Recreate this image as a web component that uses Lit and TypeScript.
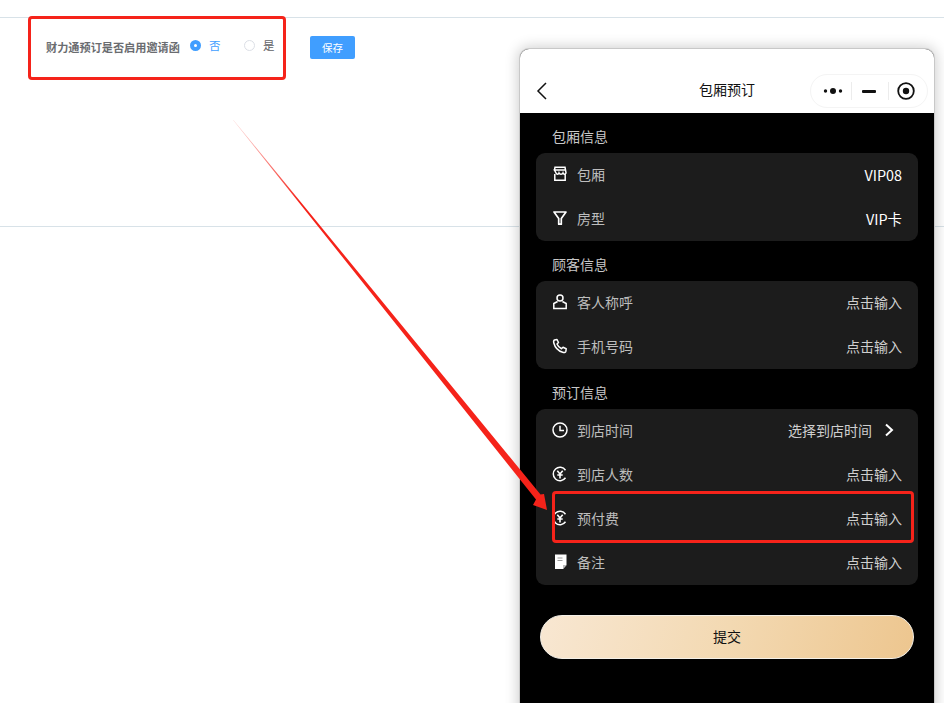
import { LitElement, html, css, svg } from "lit";
import { customElement } from "lit/decorators.js";

const I = (c: unknown) => html`<svg class="ico" viewBox="0 0 16 16" fill="none" stroke="#fff" stroke-width="1.500">${c}</svg>`;
const icons: Record<string, unknown> = {
  shop: I(svg`<path d="M3 1.200h10l.5 2.800H2.500zM2.500 4h11l.5 3c-.6 1.600-2.500 1.600-3 0-.6 1.600-3.400 1.600-4 0-.5 1.600-2.400 1.600-3 0zM2.800 8v6.300h10.400V8"/>`),
  filter: I(svg`<path d="M2 2h12L9.300 8.500V14.200H6.700V8.500z" stroke-linejoin="round" stroke-width="1.700"/>`),
  user: I(svg`<circle cx="8" cy="4" r="3"/><path d="M5.600 7.500 1.800 9.500V14.500H14.200V9.500L10.400 7.500"/>`),
  phone: I(svg`<path d="M2.500 2 5 1.500l1.500 3L5 6c.8 2 2.500 3.800 4.500 4.700L11 9.300l3.200 1.500-.3 2.400c-.2 1.300-1.900 1.600-3.200 1.100C6.500 13 3 9.500 1.800 5c-.3-1.200-.2-2.600.7-3z" stroke-linejoin="round"/>`),
  clock: I(svg`<circle cx="8" cy="8" r="7"/><path d="M8 3.800V8.500H12"/>`),
  yen: I(svg`<path d="M13.500 4.200A6.700 6.700 0 1 0 13.500 11.800"/><path d="M5.300 4.800 8 8l2.700-3.200M5.300 9h5.400M8 8v4.500" stroke-width="1.600"/>`),
  note: html`<svg class="ico" viewBox="0 0 16 16"><path d="M3 .5h11.500V11L11 15H3z" fill="#fff"/><path d="M5.500 4h5M5.500 6.500h5" stroke="#999" stroke-width="1"/><path d="M11 15v-4h3.500z" fill="#bbb"/></svg>`,
};

interface Row { icon: string; label: string; value: string; strong?: boolean; chevron?: boolean }
const sections: { title: string; rows: Row[] }[] = [
  { title: "包厢信息", rows: [
    { icon: "shop", label: "包厢", value: "VIP08", strong: true },
    { icon: "filter", label: "房型", value: "VIP卡", strong: true },
  ] },
  { title: "顾客信息", rows: [
    { icon: "user", label: "客人称呼", value: "点击输入" },
    { icon: "phone", label: "手机号码", value: "点击输入" },
  ] },
  { title: "预订信息", rows: [
    { icon: "clock", label: "到店时间", value: "选择到店时间", chevron: true },
    { icon: "yen", label: "到店人数", value: "点击输入" },
    { icon: "yen", label: "预付费", value: "点击输入" },
    { icon: "note", label: "备注", value: "点击输入" },
  ] },
];

@customElement("app-root")
export class AppRoot extends LitElement {
  static styles = css`
    :host {
      display: block; position: relative; width: 944px; height: 703px; overflow: hidden; background: #fff;
      font-family: "Noto Sans CJK SC", "Liberation Sans", sans-serif;
    }
    .rule { height: 1px; background: #d8e2e8; }
    .rule.top { margin-top: 17px; }
    .form { height: 208px; box-sizing: border-box; padding: 18px 0 0 46px; display: flex; align-items: flex-start; font-size: 11.500px; color: #5f6165; }
    .form .q { line-height: 20px; margin-top: 1px; font-size: 11.170px; font-weight: 700; color: #6a6c70; width: 144px; white-space: nowrap; }
    .radio { display: flex; align-items: center; height: 18px; line-height: 18px; }
    .radio.on { width: 54px; color: #409eff; }
    .radio.off { width: 66px; }
    .dot { width: 11px; height: 11px; border-radius: 50%; box-sizing: border-box; margin-right: 8px; }
    .on .dot { background: #fff; border: 4px solid #409eff; }
    .off .dot { border: 1px solid #dcdfe6; }
    .save { width: 45px; height: 23px; background: #409eff; color: #fff; border-radius: 2px; display: flex; align-items: center; justify-content: center; font-size: 10.500px; }
    .phone { position: absolute; left: 520px; top: 49px; width: 414px; height: 680px; box-sizing: border-box; background: #000; border-radius: 9px 9px 0 0; box-shadow: 0 0 0 1px #c8c8c8, 0 0 14px 2px rgba(0,0,0,.2); overflow: hidden; }
    .nav { height: 64px; background: #fff; position: relative; display: flex; justify-content: center; align-items: flex-end; box-sizing: border-box; padding-bottom: 13px; font-size: 14px; line-height: 22px; color: #111; }
    .back { position: absolute; left: 15px; top: 32px; width: 14px; height: 20px; }
    .capsule { position: absolute; left: 290px; top: 25px; width: 118px; height: 34px; box-sizing: border-box; border: 1px solid #f4f4f4; border-radius: 17px; display: grid; grid-template-columns: 40px 1px 36px 1px 1fr; align-items: center; }
    .capsule > div { display: flex; align-items: center; height: 100%; }
    .seg1 { padding-left: 12px; }
    .seg2 { padding-left: 10px; }
    .seg3 { padding-left: 8px; }
    .sep { width: 1px; height: 18px; background: #ececec; }
    .body { padding: 0 16px; }
    .title { height: 40px; line-height: 46px; padding-left: 16px; font-size: 14px; color: #c8c8c8; }
    .card { background: #1c1c1c; border-radius: 9px; }
    .row { height: 44px; box-sizing: border-box; padding: 0 16px 2px; display: flex; align-items: center; font-size: 14px; color: #bdbdbd; }
    .ico { width: 16px; height: 16px; margin-right: 9px; flex: none; }
    .val { margin-left: auto; color: #cfcfcf; }
    .val.strong { color: #fff; font-size: 14.400px; }
    .chev { width: 10px; height: 14px; margin-left: 12px; margin-right: 8px; }
    .submit { margin: 30px 4px 0; height: 44px; border-radius: 22px; border: 1px solid #f4f0e8; box-sizing: border-box; background: linear-gradient(105deg, #f8e7d2, #f3d9b2 50%, #edc68f); color: #111; font-size: 14px; padding-bottom: 2px; display: flex; align-items: center; justify-content: center; }
    .ann { position: absolute; border: 3px solid #f5231a; border-radius: 4px; box-sizing: border-box; }
    .ann.a { left: 28px; top: 16px; width: 258px; height: 64px; }
    .ann.b { left: 552px; top: 491px; width: 362px; height: 52px; }
    .arrow { position: absolute; left: 0; top: 0; width: 944px; height: 703px; pointer-events: none; }
  `;

  render() {
    return html`
      <div class="rule top"></div>
      <div class="form">
        <div class="q">财力通预订是否启用邀请函</div>
        <div class="radio on"><span class="dot"></span>否</div>
        <div class="radio off"><span class="dot"></span>是</div>
        <div class="save">保存</div>
      </div>
      <div class="rule"></div>

      <div class="phone">
        <div class="nav">
          <svg class="back" viewBox="0 0 14 20" fill="none" stroke="#111" stroke-width="1.500"><path d="M11 2 3 10l8 8"/></svg>
          包厢预订
          <div class="capsule">
            <div class="seg1"><svg width="20" height="8" viewBox="0 0 20 8" fill="#111"><circle cx="2.500" cy="4" r="1.700"/><circle cx="10" cy="4" r="3"/><circle cx="17.500" cy="4" r="1.700"/></svg></div>
            <span class="sep"></span>
            <div class="seg2"><svg width="14" height="3" viewBox="0 0 14 3" fill="#111"><rect width="14" height="3" rx="1"/></svg></div>
            <span class="sep"></span>
            <div class="seg3"><svg width="18" height="18" viewBox="0 0 18 18"><circle cx="9" cy="9" r="7.800" fill="none" stroke="#111" stroke-width="1.800"/><circle cx="9" cy="9" r="3.200" fill="#111"/></svg></div>
          </div>
        </div>
        <div class="body">
          ${sections.map((s) => html`
            <div class="title">${s.title}</div>
            <div class="card">
              ${s.rows.map((r) => html`
                <div class="row">
                  ${icons[r.icon]}
                  <span>${r.label}</span>
                  <span class="val ${r.strong ? "strong" : ""}">${r.value}</span>
                  ${r.chevron ? html`<svg class="chev" viewBox="0 0 10 14" fill="none" stroke="#fff" stroke-width="2"><path d="M2 1.500 8 7l-6 5.500"/></svg>` : ""}
                </div>`)}
            </div>`)}
          <div class="submit">提交</div>
        </div>
      </div>

      <div class="ann a"></div>
      <div class="ann b"></div>
      <svg class="arrow" viewBox="0 0 944 703">
        <defs><linearGradient id="shaft" gradientUnits="userSpaceOnUse" x1="233" y1="120" x2="300" y2="203"><stop offset="0" stop-color="#f5231a" stop-opacity=".15"/><stop offset="1" stop-color="#f5231a"/></linearGradient></defs>
        <polygon points="233,120 233.500,120 540.500,494.500 544,494 547,510 533,505 536,499.500" fill="url(#shaft)"/>
      </svg>
    `;
  }
}
